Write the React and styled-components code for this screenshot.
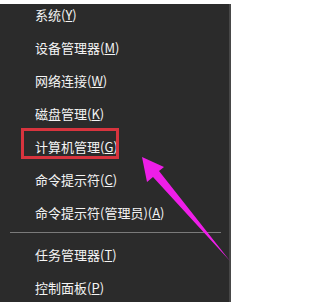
import React from "react";
import styled, { createGlobalStyle } from "styled-components";

const Global = createGlobalStyle`
  html, body {
    margin: 0;
    padding: 0;
    background: #ffffff;
  }
  body {
    font-family: "Noto Sans CJK SC", "Noto Sans", sans-serif;
  }
`;

const Stage = styled.div`
  position: relative;
  width: 237px;
  height: 302px;
  overflow: hidden;
  padding-top: 4px;
  box-sizing: border-box;
`;

const Menu = styled.div`
  width: 231px;
  height: 298px;
  background: #2b2b2b;
  border-right: 2px solid #474747;
  box-sizing: border-box;
  overflow: hidden;
`;

const List = styled.div`
  display: flex;
  flex-direction: column;
  margin-top: -6px;
`;

const Item = styled.div`
  position: relative;
  height: 33px;
  display: flex;
  align-items: center;
  padding-left: 35px;
  color: #f4f4f4;
  font-size: 13px;
  white-space: nowrap;
`;

const Key = styled.span`
  text-decoration: underline;
  text-underline-offset: 1px;
`;

const Highlight = styled.div`
  position: absolute;
  left: 21px;
  top: -2px;
  width: 98px;
  height: 31px;
  border: 3px solid #d7343e;
  box-sizing: border-box;
`;

const Separator = styled.div`
  height: 1px;
  margin: 3px 8px 5px 10px;
  background: #7a7a7a;
`;

const Arrow = styled.svg`
  position: absolute;
  left: 0;
  top: 0;
  pointer-events: none;
`;

const items = [
  ["系统", "Y"],
  ["设备管理器", "M"],
  ["网络连接", "W"],
  ["磁盘管理", "K"],
  ["计算机管理", "G", true],
  ["命令提示符", "C"],
  ["命令提示符(管理员)", "A"],
];

const bottom = [
  ["任务管理器", "T"],
  ["控制面板", "P"],
];

const Row = ({ label, hotkey, boxed }) => (
  <Item>
    {boxed && <Highlight />}
    {label}(<Key>{hotkey}</Key>)
  </Item>
);

export default function App() {
  return (
    <>
      <Global />
      <Stage>
        <Menu>
          <List>
            {items.map(([label, k, boxed]) => (
              <Row key={label + k} label={label} hotkey={k} boxed={boxed} />
            ))}
            <Separator />
            {bottom.map(([label, k]) => (
              <Row key={label} label={label} hotkey={k} />
            ))}
          </List>
        </Menu>
        <Arrow width="237" height="302" viewBox="0 0 237 302">
          <polygon
            points="142,157 164,167 159,171 230,261 153,177 147,182"
            fill="#ee1ee8"
          />
        </Arrow>
      </Stage>
    </>
  );
}
